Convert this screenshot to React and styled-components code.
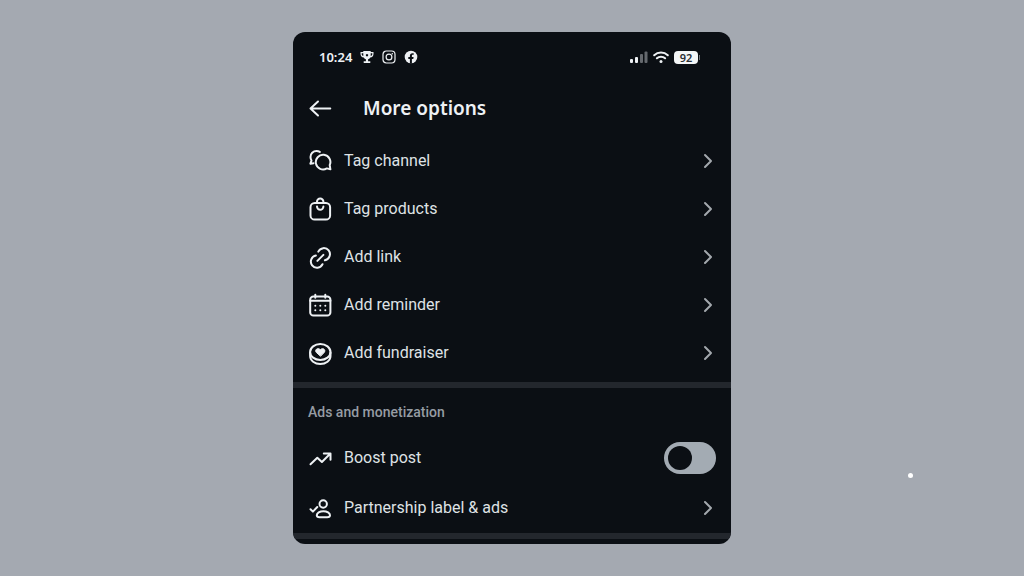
import React, { useState } from "react";
import styled, { createGlobalStyle } from "styled-components";

const ChannelIcon = () => (
  <Icon viewBox="0 0 24 24" aria-hidden="true">
    <path d="M11.800 2.900C10.800 2.300 9.700 2 8.600 2C5 2 2.500 4.700 2.500 8c0 1.400.4 2.600 1 3.600L2.400 14.700l3.100-.5" />
    <path d="M22.400 20.300l-3.600-.9A7.300 7.300 0 1 1 21.700 16.200z" />
  </Icon>
);

const BagIcon = () => (
  <Icon viewBox="0 0 24 24" aria-hidden="true">
    <rect x="2.500" y="6" width="19.600" height="16.600" rx="4.200" />
    <path d="M9 6V4.800a3.200 3.200 0 0 1 6.400 0V6" />
    <path d="M9 9.600a3.200 3.200 0 0 0 6.400 0" />
  </Icon>
);

const LinkIcon = () => (
  <Icon viewBox="0 0 24 24" aria-hidden="true">
    <path d="M10.300 6.600A6.100 6.100 0 1 1 16.900 15.200" />
    <path d="M14.500 19.200A6.100 6.100 0 1 1 7.900 10.600" />
    <path d="M9.400 15.900l6-6" />
  </Icon>
);

const CalendarIcon = () => (
  <Icon viewBox="0 0 24 24" aria-hidden="true">
    <rect x="2.200" y="3.400" width="20.200" height="19.200" rx="3.200" />
    <path d="M2.200 7.800h20.200M7.300 1.800v3M17.300 1.800v3" />
    <path d="M7.300 12.700h.01M12.300 12.700h.01M17.300 12.700h.01M7.300 17.300h.01M12.300 17.300h.01M17.300 17.300h.01" />
  </Icon>
);

const FundraiserIcon = () => (
  <Icon viewBox="0 0 24 24" aria-hidden="true">
    <ellipse cx="12.300" cy="11" rx="10.200" ry="7.900" />
    <path d="M2.100 11.500v3.600c0 4.400 4.600 7.900 10.200 7.900s10.200-3.500 10.200-7.900v-3.600" />
    <path
      d="M12.300 15l-3.900-3.500c-2.300-2.500 1.200-5.400 3.900-2.900c2.700-2.500 6.200.4 3.900 2.900z"
      fill="currentColor"
      strokeWidth="1"
    />
  </Icon>
);

const BoostIcon = () => (
  <Icon viewBox="0 0 24 24" aria-hidden="true">
    <path d="M2.500 18.300l6.800-6.500l4.600 4.200l8-8M15.800 7.400h6.700v6.400" />
  </Icon>
);

const PartnerIcon = () => (
  <Icon viewBox="0 0 24 24" aria-hidden="true">
    <path d="M2.500 13.300l2.400 2.300l4.400-4.600" />
    <circle cx="15.200" cy="8" r="3.700" />
    <path d="M15.400 15.200c3.700 0 6.600 2 6.600 4c0 1.300-1.200 2-2.800 2h-7.600c-1.600 0-2.800-.7-2.800-2c0-2 2.900-4 6.600-4z" />
  </Icon>
);

const Chevron = () => (
  <ChevronSvg viewBox="0 0 16 24" aria-hidden="true">
    <path d="M5 6l6 6l-6 6" />
  </ChevronSvg>
);

const postOptions = [
  { label: "Tag channel", icon: <ChannelIcon /> },
  { label: "Tag products", icon: <BagIcon /> },
  { label: "Add link", icon: <LinkIcon /> },
  { label: "Add reminder", icon: <CalendarIcon /> },
  { label: "Add fundraiser", icon: <FundraiserIcon /> },
];

const StatusBar = () => (
  <Status>
    <StatusLeft>
      <Time>10:24</Time>
      <StatusIcon viewBox="0 0 14 14" aria-hidden="true">
        <path
          fill="currentColor"
          fillRule="evenodd"
          d="M3.300 1h7.400v1H13.500v2c0 2-1.300 3.300-3.200 3.500C9.700 8.500 9 9.100 8.100 9.300v2H10.300V13H3.700v-1.700h2.200v-2C5 9.100 4.300 8.500 3.700 7.500C1.800 7.300.5 6 .5 4V2h2.800zM1.700 3.200V4c0 1 .6 1.800 1.600 2.100V3.200zm9 0v2.900c1-.3 1.600-1.100 1.600-2.100v-.8zM7 4a1.200 1.200 0 1 0 .01 0z"
        />
      </StatusIcon>
      <StatusIcon viewBox="0 0 14 14" aria-hidden="true">
        <g fill="none" stroke="currentColor" strokeWidth="1.200">
          <rect x="1" y="1" width="12" height="12" rx="3.400" />
          <circle cx="7" cy="7" r="2.900" />
        </g>
        <circle cx="10.300" cy="3.700" r=".8" fill="currentColor" />
      </StatusIcon>
      <StatusIcon viewBox="0 0 14 14" aria-hidden="true">
        <circle cx="7" cy="7" r="6.300" fill="currentColor" />
        <path
          fill="#0b0f14"
          d="M5.900 13.500V9H4.300V7.100h1.600V5.800c0-1.700 1-2.600 2.500-2.600l1.300.1v1.500h-.8c-.8 0-1 .5-1 1v1.300h1.700L9.300 9H7.900v4.500z"
        />
      </StatusIcon>
    </StatusLeft>
    <StatusRight>
      <SignalSvg viewBox="0 0 18 14" aria-hidden="true">
        <rect x="0" y="9" width="3" height="4" rx="1" />
        <rect x="5" y="7" width="3" height="6" rx="1" />
        <rect x="10" y="4" width="3" height="9" rx="1" opacity=".4" />
        <rect x="14.500" y="1.500" width="3" height="11.500" rx="1" opacity=".4" />
      </SignalSvg>
      <WifiSvg viewBox="0 0 16 14" aria-hidden="true">
        <path d="M1.200 5.300a9.800 9.800 0 0 1 13.600 0M3.900 8.300a5.900 5.900 0 0 1 8.200 0" />
        <circle cx="8" cy="11.500" r="1.500" />
      </WifiSvg>
      <Battery>
        <BatteryLevel>92</BatteryLevel>
        <BatteryTip />
      </Battery>
    </StatusRight>
  </Status>
);

const App = () => {
  const [boost, setBoost] = useState(false);

  return (
    <>
      <GlobalStyle />
      <Page>
        <Panel>
          <StatusBar />
          <Head>
            <Back type="button" aria-label="Back">
              <Icon viewBox="0 0 24 24" aria-hidden="true">
                <path d="M2.500 12.500H22.300M10 5.500l-7.500 7l7.500 7" />
              </Icon>
            </Back>
            <Title>More options</Title>
          </Head>
          <OptionList>
            {postOptions.map((option) => (
              <li key={option.label}>
                <OptionButton type="button">
                  {option.icon}
                  <Label>{option.label}</Label>
                  <Chevron />
                </OptionButton>
              </li>
            ))}
          </OptionList>
          <Divider />
          <SectionTitle>Ads and monetization</SectionTitle>
          <BoostRow>
            <BoostIcon />
            <Label as="label" htmlFor="boost">
              Boost post
            </Label>
            <Toggle
              id="boost"
              type="checkbox"
              role="switch"
              checked={boost}
              onChange={(e) => setBoost(e.target.checked)}
            />
          </BoostRow>
          <OptionButton type="button" $tall>
            <PartnerIcon />
            <Label>Partnership label &amp; ads</Label>
            <Chevron />
          </OptionButton>
          <Divider />
        </Panel>
        <Speck />
      </Page>
    </>
  );
};

export default App;

const GlobalStyle = createGlobalStyle`
  * {
    box-sizing: border-box;
  }

  body {
    margin: 0;
    background: #a4a9b1;
    font-family: Roboto, "Noto Sans", sans-serif;
  }
`;

const Page = styled.div`
  position: relative;
  display: flex;
  align-items: center;
  justify-content: center;
  min-height: 100vh;
  padding: 16px;
`;

const Panel = styled.main`
  width: 100%;
  max-width: 438px;
  padding-bottom: 5px;
  overflow: hidden;
  border-radius: 12px;
  background: #0b0f14;
  color: #eef1f4;
`;

const Status = styled.div`
  display: flex;
  align-items: center;
  justify-content: space-between;
  height: 50px;
  padding: 0 31px 0 26px;
`;

const StatusLeft = styled.div`
  display: flex;
  align-items: center;
  gap: 8px;
`;

const StatusRight = styled.div`
  display: flex;
  align-items: center;
  gap: 5px;
`;

const Time = styled.span`
  font-family: "Noto Sans", sans-serif;
  font-size: 13px;
  font-weight: 600;
  line-height: 16px;
`;

const StatusIcon = styled.svg`
  width: 14px;
  height: 14px;
`;

const SignalSvg = styled.svg`
  width: 18px;
  height: 14px;
  fill: currentColor;
`;

const WifiSvg = styled.svg`
  width: 16px;
  height: 14px;
  fill: currentColor;

  path {
    fill: none;
    stroke: currentColor;
    stroke-width: 2;
    stroke-linecap: round;
  }
`;

const Battery = styled.div`
  display: flex;
  align-items: center;
  gap: 1px;
`;

const BatteryLevel = styled.span`
  width: 24px;
  border-radius: 4px;
  background: #f4f6f7;
  color: #2b2f33;
  font-family: "Noto Sans", sans-serif;
  font-size: 11px;
  font-weight: 600;
  line-height: 13px;
  text-align: center;
`;

const BatteryTip = styled.span`
  width: 1px;
  height: 5px;
  background: #70757a;
`;

const Head = styled.header`
  display: flex;
  align-items: center;
  gap: 31px;
  height: 52px;
  padding: 0 15px;
`;

const Back = styled.button`
  display: flex;
  padding: 0;
  border: 0;
  background: none;
  color: inherit;
  cursor: pointer;
`;

const Title = styled.h1`
  margin: 0;
  font-family: "Noto Sans", sans-serif;
  font-size: 19px;
  font-weight: 600;
  line-height: 28px;
`;

const Icon = styled.svg`
  flex: none;
  width: 24px;
  height: 24px;
  fill: none;
  stroke: currentColor;
  stroke-width: 2;
  stroke-linecap: round;
  stroke-linejoin: round;
`;

const ChevronSvg = styled.svg`
  flex: none;
  width: 16px;
  height: 24px;
  fill: none;
  stroke: #a3a8ad;
  stroke-width: 2;
  stroke-linecap: round;
  stroke-linejoin: round;
`;

const OptionList = styled.ul`
  margin: 0;
  padding: 3px 0 5px;
  list-style: none;
`;

const OptionButton = styled.button`
  display: flex;
  align-items: center;
  gap: 12px;
  width: 100%;
  height: ${(props) => (props.$tall ? "50px" : "48px")};
  padding: 0 15px;
  border: 0;
  background: none;
  color: inherit;
  font: inherit;
  text-align: left;
  cursor: pointer;
`;

const Label = styled.span`
  flex: 1;
  color: #dfe2e5;
  font-size: 16px;
  line-height: 24px;
`;

const Divider = styled.div`
  height: 6px;
  background: #23272d;
`;

const SectionTitle = styled.h2`
  margin: 0;
  padding: 14px 15px 11px;
  color: #969ca3;
  font-size: 14px;
  font-weight: 500;
  line-height: 20px;
`;

const BoostRow = styled.div`
  display: flex;
  align-items: center;
  gap: 12px;
  height: 50px;
  padding: 0 15px;
`;

const Toggle = styled.input`
  appearance: none;
  display: flex;
  align-items: center;
  width: 52px;
  height: 32px;
  margin: 0;
  padding: 0 4px;
  border-radius: 16px;
  background: #a3abb3;
  cursor: pointer;

  &::before {
    content: "";
    width: 24px;
    height: 24px;
    border-radius: 50%;
    background: #0b0f14;
  }

  &:checked {
    justify-content: flex-end;
    background: #eef1f4;
  }
`;

const Speck = styled.span`
  position: absolute;
  top: 473px;
  right: 111px;
  width: 5px;
  height: 5px;
  border-radius: 50%;
  background: #ffffff;
`;
